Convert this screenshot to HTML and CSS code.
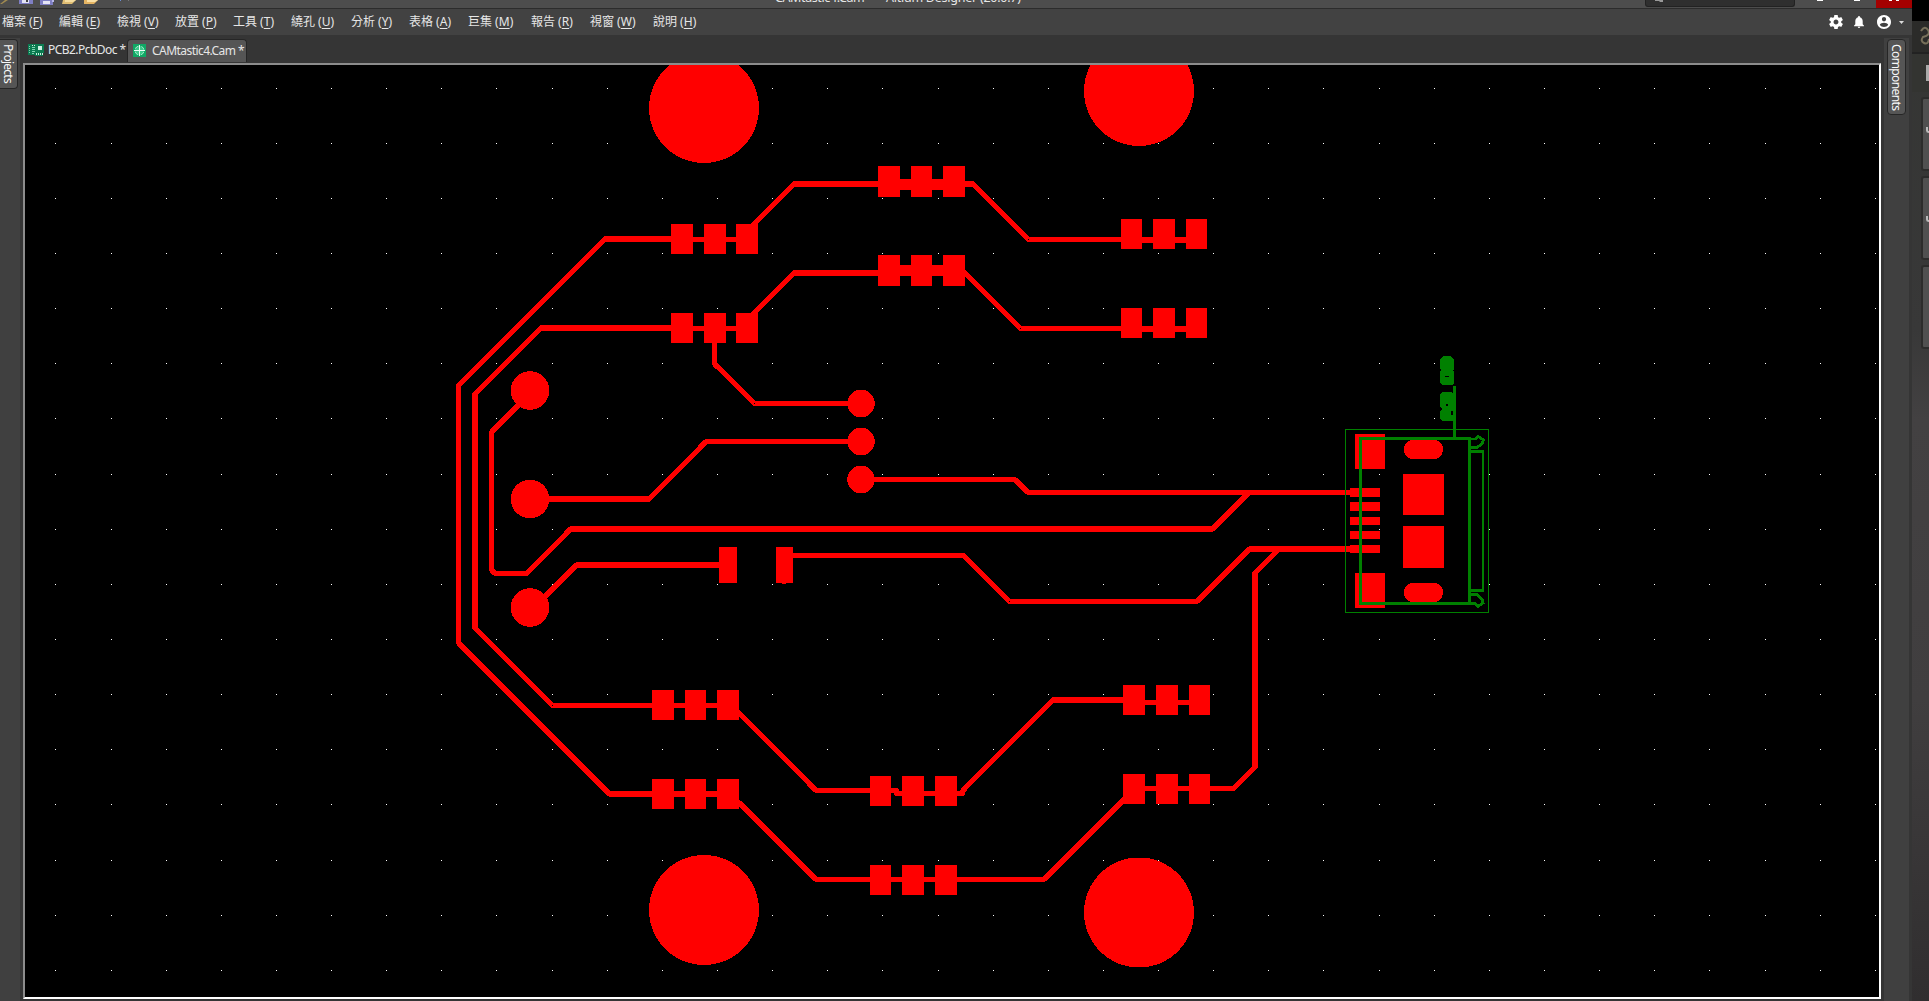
FILE: index.html
```
<!DOCTYPE html>
<html lang="zh-Hant">
<head>
<meta charset="utf-8">
<title>CAMtastic4.Cam - Altium Designer</title>
<link rel="stylesheet" href="styles.css">
</head>
<body>
<div class="desktop">
  <div class="app">
    <header class="titlebar">
      <svg class="quick" width="140" height="8" viewBox="0 0 140 8">
        <path d="M0 4L5 0H8L2 4z" fill="#a08a50"/>
        <path d="M19 0H33V4H19z" fill="#7f7fc4"/><path d="M22 0H29V3H22z" fill="#e4e4f4"/><path d="M26 0h2v2h-2z" fill="#444"/>
        <path d="M40 0H53V5H40z" fill="#7f7fc4"/><path d="M43 1H50V4H43z" fill="#e4e4f4"/><path d="M52 0h2v2h-2z" fill="#b8b8e8"/>
        <path d="M63 0H76L72 4H62z" fill="#e0bd73"/><path d="M65 0H76L73 2H65z" fill="#f5dda0"/>
        <path d="M84 0H98L94 4H84z" fill="#e5b463"/><path d="M87 0H98L95 2H87z" fill="#fae0a6"/>
        <path d="M120 0h1v1h-1z" fill="#6d8fd8"/><path d="M128 0h1v1h-1z" fill="#777"/>
      </svg>
      <div class="caption"><span class="doc">CAMtastic4.Cam</span><span>Altium Designer (20.0.7)</span></div>
      <div class="search"><svg width="10" height="3" viewBox="0 0 10 3"><path d="M0 0h8v2H5L4 1H0z" fill="#999"/></svg></div>
      <div class="winbtn"><i class="dash"></i></div>
      <div class="winbtn"><i class="dash"></i></div>
      <div class="winbtn close"><i class="dot"></i><i class="dot"></i></div>
    </header>

    <nav class="menubar">
      <div class="menus">
        <span>檔案 (<u>F</u>)</span><span>編輯 (<u>E</u>)</span><span>檢視 (<u>V</u>)</span><span>放置 (<u>P</u>)</span><span>工具 (<u>T</u>)</span><span>繞孔 (<u>U</u>)</span><span>分析 (<u>Y</u>)</span><span>表格 (<u>A</u>)</span><span>巨集 (<u>M</u>)</span><span>報告 (<u>R</u>)</span><span>視窗 (<u>W</u>)</span><span>說明 (<u>H</u>)</span>
      </div>
      <div class="tools">
        <svg class="gear" width="14" height="14" viewBox="2 2 20 20"><path fill="#fff" d="M19.43 12.98c.04-.32.07-.64.07-.98s-.03-.66-.07-.98l2.11-1.65c.19-.15.24-.42.12-.64l-2-3.46c-.12-.22-.39-.3-.61-.22l-2.49 1c-.52-.4-1.08-.73-1.69-.98l-.38-2.65C14.46 2.18 14.25 2 14 2h-4c-.25 0-.46.18-.49.42l-.38 2.65c-.61.25-1.17.59-1.69.98l-2.49-1c-.23-.09-.49 0-.61.22l-2 3.46c-.13.22-.07.49.12.64l2.11 1.65c-.04.32-.07.65-.07.98s.03.66.07.98l-2.11 1.65c-.19.15-.24.42-.12.64l2 3.46c.12.22.39.3.61.22l2.49-1c.52.4 1.08.73 1.69.98l.38 2.65c.03.24.24.42.49.42h4c.25 0 .46-.18.49-.42l.38-2.65c.61-.25 1.17-.59 1.69-.98l2.49 1c.23.09.49 0 .61-.22l2-3.46c.12-.22.07-.49-.12-.64l-2.11-1.65zM12 15.5c-1.93 0-3.5-1.57-3.5-3.5s1.57-3.5 3.5-3.5 3.5 1.57 3.5 3.5-1.57 3.5-3.5 3.5z"/></svg>
        <svg class="bell" width="10" height="12" viewBox="4 2.5 16 19.5"><path fill="#fff" d="M12 22c1.1 0 2-.9 2-2h-4c0 1.1.9 2 2 2zm6-6v-5c0-3.07-1.64-5.64-4.5-6.32V4c0-.83-.67-1.5-1.5-1.5s-1.5.67-1.5 1.5v.68C7.63 5.36 6 7.92 6 11v5l-2 2v1h16v-1l-2-2z"/></svg>
        <svg class="user" width="14" height="14" viewBox="2 2 20 20"><path fill="#fff" d="M12 2C6.48 2 2 6.48 2 12s4.48 10 10 10 10-4.48 10-10S17.52 2 12 2zm0 3c1.66 0 3 1.34 3 3s-1.34 3-3 3-3-1.34-3-3 1.34-3 3-3zm0 14.2c-2.5 0-4.71-1.28-6-3.22.03-1.99 4-3.08 6-3.08 1.99 0 5.97 1.09 6 3.08-1.29 1.94-3.5 3.22-6 3.22z"/></svg>
        <svg width="5" height="3" viewBox="0 0 5 3"><path fill="#ddd" d="M0 0H5L2.500 3z"/></svg>
      </div>
    </nav>

    <main class="workspace">
      <aside class="dock left"><div class="docktab">Projects</div></aside>
      <section class="center">
        <div class="tabs">
          <div class="tab pcb">
            <svg width="16" height="12" viewBox="0 0 16 12"><path fill="#0b7a50" d="M0 0h16v9h-1v3H7V11H0z"/><path fill="#c8efe0" d="M10 2h4v4h-4zM8 9h1v2H8zM10 9h1v2h-1zM12 9h1v2h-1zM14 9h1v2h-1zM4 1h1v1H4zM6 1h1v1H6z"/><path fill="#7fd3b0" d="M1 2h1v1H1zM1 4h1v1H1zM1 6h1v1H1zM1 8h1v1H1zM4 3h3v1H4zM4 5h3v1H4zM4 7h3v1H4zM4 9h2v1H4z"/></svg>
            <span>PCB2.PcbDoc *</span>
          </div>
          <div class="tab cam">
            <svg width="13" height="13" viewBox="0 0 13 13"><path fill="#10a865" d="M0 0h13v13H0z"/><circle cx="6.500" cy="6.500" r="4.500" fill="#3cc98a" stroke="#a9ecce" stroke-width="1" stroke-dasharray="4 3.070" stroke-dashoffset="-1.500"/><path fill="#e8fff5" d="M6 1h1v11H6zM1 6h11v1H1z"/></svg>
            <span>CAMtastic4.Cam *</span>
          </div>
        </div>
        <div class="viewport">
<svg class="board" width="1854" height="932" viewBox="25 65 1854 932" shape-rendering="crispEdges">
  <defs>
    <path id="dots" fill="#fff" d="M55 0h1v1h-1zM111 0h1v1h-1zM166 0h1v1h-1zM221 0h1v1h-1zM276 0h1v1h-1zM331 0h1v1h-1zM386 0h1v1h-1zM441 0h1v1h-1zM496 0h1v1h-1zM552 0h1v1h-1zM607 0h1v1h-1zM662 0h1v1h-1zM717 0h1v1h-1zM772 0h1v1h-1zM827 0h1v1h-1zM882 0h1v1h-1zM938 0h1v1h-1zM993 0h1v1h-1zM1048 0h1v1h-1zM1103 0h1v1h-1zM1158 0h1v1h-1zM1213 0h1v1h-1zM1268 0h1v1h-1zM1323 0h1v1h-1zM1379 0h1v1h-1zM1434 0h1v1h-1zM1489 0h1v1h-1zM1544 0h1v1h-1zM1599 0h1v1h-1zM1654 0h1v1h-1zM1709 0h1v1h-1zM1765 0h1v1h-1zM1820 0h1v1h-1zM1875 0h1v1h-1z"/>
  </defs>
  <g>
    <use href="#dots" y="88"/><use href="#dots" y="143"/><use href="#dots" y="198"/><use href="#dots" y="253"/><use href="#dots" y="308"/><use href="#dots" y="363"/><use href="#dots" y="418"/><use href="#dots" y="474"/><use href="#dots" y="529"/><use href="#dots" y="584"/><use href="#dots" y="639"/><use href="#dots" y="694"/><use href="#dots" y="749"/><use href="#dots" y="804"/><use href="#dots" y="860"/><use href="#dots" y="915"/><use href="#dots" y="970"/>
  </g>

  <!-- mounting holes, wire pads -->
  <g class="copper">
    <circle cx="704" cy="108" r="55"/><circle cx="1139" cy="91" r="55"/><circle cx="704" cy="910" r="55"/><circle cx="1139" cy="912.500" r="55"/>
    <circle cx="530" cy="390.500" r="19.300"/><circle cx="530" cy="499" r="19.300"/><circle cx="530" cy="607.500" r="19.300"/>
    <circle cx="861" cy="403.500" r="13.800"/><circle cx="861" cy="441.500" r="13.800"/><circle cx="861" cy="479.500" r="13.800"/>
  </g>

  <!-- traces, 5 units wide -->
  <g class="trace">
    <path d="M605 239L458.500 385.500V643L610 794.500"/>
    <path d="M754 224L794 184M754 313L794 273"/>
    <path d="M973 184L1028.500 239.500H1121M962 270L1020.500 328.500H1121"/>
    <path d="M541 328L475 394M475 628L552.500 705.500H652"/>
    <path d="M714.500 343V364L754.500 403.500H861"/>
    <path d="M649 499L706 441.500H861"/>
    <path d="M530 393.500L491.500 432V570L495 573.500H526.500L570.500 529"/>
    <path d="M861 479.500H1015L1028 492.500H1350M1212.500 529L1249 492.500"/>
    <path d="M532 609.500L576.500 565"/>
    <path d="M793 555.500H963.500L1009.500 601.500H1197L1249.500 549M1279 549L1255 573M1255 767L1233.500 788.500H1210"/>
    <path d="M739 713L816 790.500H896.500V793.500H962.500V791L1053 700"/>
    <path d="M739 802.500L816 879.500H1044L1125 798.500"/>
  </g>

  <!-- traces, 6 units wide -->
  <g class="trace wide">
    <path d="M605 239H671M794 184H973M794 273H878M541 328H671"/>
    <path d="M475 394V628M610 794H652M549 499H649M570.500 529H1212.500M576.500 565H719"/>
    <path d="M1249.500 549H1350M1255 573V767M1053 700H1123"/>
  </g>

  <!-- LED footprints -->
  <g class="copper">
    <path d="M671 224h22v30h-22zM704 224h22v30h-22zM736 224h22v30h-22zM693 237h43v5h-43z"/>
    <path d="M671 313h22v30h-22zM704 313h22v30h-22zM736 313h22v30h-22zM693 326h43v5h-43z"/>
    <path d="M878 166h22v31h-22zM911 166h21v31h-21zM943 166h22v31h-22zM900 179h43v11h-43z"/>
    <path d="M878 255h22v31h-22zM911 255h21v31h-21zM943 255h22v31h-22zM900 265h43v11h-43z"/>
    <path d="M1121 219h21v30h-21zM1153 219h22v30h-22zM1186 219h21v30h-21zM1142 237h44v6h-44z"/>
    <path d="M1121 308h21v30h-21zM1153 308h22v30h-22zM1186 308h21v30h-21zM1142 326h44v6h-44z"/>
    <path d="M652 690h22v30h-22zM685 690h21v30h-21zM717 690h22v30h-22zM674 703h43v5h-43z"/>
    <path d="M652 779h22v30h-22zM685 779h21v30h-21zM717 779h22v30h-22zM674 791h43v6h-43z"/>
    <path d="M870 776h21v30h-21zM902 776h22v30h-22zM935 776h22v30h-22z"/>
    <path d="M870 865h21v30h-21zM902 865h22v30h-22zM935 865h22v30h-22z"/>
    <path d="M1123 685h22v30h-22zM1156 685h22v30h-22zM1189 685h21v30h-21zM1145 700h44v5h-44z"/>
    <path d="M1123 774h22v30h-22zM1156 774h22v30h-22zM1189 774h21v30h-21zM1145 786h44v5h-44z"/>
    <path d="M719 547h18v36h-18zM776 547h17v36h-17zM782 583h4v1h-4z"/>
  </g>

  <!-- USB connector -->
  <g class="copper">
    <path d="M1355 434h30v35h-30zM1355 573h30v35h-30z"/>
    <path d="M1350 488h30v9h-30zM1350 502h30v9h-30zM1350 517h30v8h-30zM1350 531h30v8h-30zM1350 545h30v8h-30z"/>
    <path d="M1403 474h41v41h-41zM1403 526h41v42h-41z"/>
    <rect x="1404" y="440" width="39" height="19" rx="9"/><rect x="1404" y="583" width="39" height="19" rx="9"/>
  </g>
  <g class="silk">
    <path class="hair" d="M1345.500 429.500H1488.500V612.500H1345.500z"/>
    <path d="M1360.500 438.500H1469.500V603.500H1360.500zM1454.500 386V438"/>
    <path d="M1471 451.500H1483M1471 590.500H1483"/><path class="thin" d="M1483 450V592"/>
    <path class="hook" d="M1471 439H1475L1478 436.500L1483.500 440L1482 444L1477 447.500H1471M1471 594.500H1477L1482 599L1483 603L1478 606.500L1475 603.500H1471"/>
    <path class="blob" d="M1443 356h7l4 4v9l-1 1 1 2v11l-2 2h-10l-2-2v-11l1-2-1-1v-9z M1445 376v1h4v-1z"/>
    <path class="blob" d="M1442 392h10l2 3v9l-2 2 2 2v12l-2 1h-10l-2-3v-7l2-2-2-3v-11z M1446 404v2h2v-2z M1451 411v4h2v-4z"/>
  </g>
</svg>
        </div>
      </section>
      <aside class="dock right"><div class="docktab">Components</div></aside>
    </main>
  </div>

  <div class="behind">
    <div class="black"></div>
    <div class="strip"><svg width="10" height="22" viewBox="0 0 10 22"><path fill="none" stroke="#77705a" stroke-width="2" d="M1 7Q5 1 8 6T3 13Q0 17 4 19T9 15"/></svg></div>
    <div class="strip two"><i></i></div>
    <div class="ghost g1"><i></i></div>
    <div class="ghost g2"><i></i></div>
    <div class="ghost g3"></div>
  </div>
</div>
</body>
</html>
```
FILE: styles.css
```
* { box-sizing: border-box; }
body {
  margin: 0;
  background: #353535;
  font: 12px/16px "Noto Sans", "Noto Sans CJK TC", sans-serif;
  color: #e6e6e6;
  overflow: hidden;
}
svg { display: block; flex: none; }
.desktop { display: flex; width: 1929px; height: 1001px; }
.app { width: 1912px; display: flex; flex-direction: column; background: #353535; }

.titlebar {
  height: 9px;
  flex: none;
  display: flex;
  background: #4d4d4d;
  border-bottom: 1px solid #2c2c2c;
  overflow: hidden;
}
.caption {
  display: flex;
  width: 870px;
  margin-left: 635px;
  margin-top: -12px;
  height: 20px;
  line-height: 20px;
  font-size: 12.500px;
  letter-spacing: -0.250px;
  white-space: nowrap;
}
.caption .doc { width: 111px; letter-spacing: -0.400px; }
.search {
  width: 150px;
  height: 7px;
  background: #2f2f2f;
  border: 1px solid #222;
  border-top: 0;
  border-radius: 0 0 3px 3px;
  padding-left: 9px;
}
.winbtn { width: 36px; display: flex; justify-content: center; }
.search + .winbtn { margin-left: 6px; width: 38px; }
.dash { width: 6px; height: 1px; background: #fff; }
.winbtn.close { width: 36px; margin-left: auto; background: #a40000; gap: 4px; }
.dot { width: 3px; height: 1px; background: #fff; }

.menubar {
  height: 26px;
  flex: none;
  display: flex;
  justify-content: space-between;
  align-items: center;
  background: #424242;
}
.menus {
  display: grid;
  grid-template-columns: 57px 58px 58px 58px 58px 60px 58px 59px 63px 59px 63px 60px;
  padding-left: 2px;
  white-space: nowrap;
}
.menus u { text-underline-offset: 2px; }
.tools { display: flex; align-items: center; padding-right: 8px; }
.gear { margin-right: 11px; }
.bell { margin-right: 13px; }
.user { margin-right: 8px; }

.workspace { flex: 1; display: flex; min-height: 0; }
.dock { background: #404040; margin-top: 3px; padding-top: 1px; flex: none; }
.dock.left { width: 20px; }
.dock.right { width: 25px; padding-left: 3px; margin-right: 3px; margin-left: 3px; }
.docktab {
  writing-mode: vertical-rl;
  background: #555;
  border: 1px solid #262626;
  border-radius: 4px;
  line-height: 16px;
  color: #f8f8f8;
}
.left .docktab { width: 18px; height: 50px; padding-top: 4px; padding-right: 1px; border-left: 0; border-radius: 0 4px 4px 0; letter-spacing: -0.750px; }
.right .docktab { width: 19px; height: 76px; padding-top: 4px; padding-right: 1px; letter-spacing: -0.600px; }

.center { width: 1861px; padding-left: 3px; display: flex; flex-direction: column; }
.tabs { display: flex; height: 28px; padding: 4px 0 1px 5px; flex: none; letter-spacing: -0.550px; }
.tab { display: flex; align-items: center; height: 23px; white-space: nowrap; }
.tab.pcb { width: 99px; gap: 4px; padding-bottom: 1px; }
.tab.cam {
  width: 120px;
  padding-left: 5px;
  padding-bottom: 1px;
  gap: 6px;
  background: #555;
  border: 1px solid #262626;
  border-bottom: 0;
  border-radius: 4px 4px 0 0;
}
.viewport {
  width: 1858px;
  height: 936px;
  background: #000;
  border: 2px solid #fff;
  border-top-color: #8c8c8c;
  border-left-color: #8c8c8c;
}

.copper { fill: #f00; }
.trace { fill: none; stroke: #f00; stroke-width: 5; stroke-linejoin: round; stroke-linecap: round; }
.trace.wide { stroke-width: 6; stroke-linecap: butt; }
.silk { fill: none; stroke: #008000; stroke-width: 3; }
.silk .hair { stroke-width: 1; }
.silk .thin { stroke-width: 2; }
.silk .hook { stroke-width: 2.800; }
.silk .blob { fill: #008000; fill-rule: evenodd; stroke: none; }

.behind {
  width: 17px;
  display: flex;
  flex-direction: column;
  align-items: flex-end;
  background: linear-gradient(180deg, #343533 0, #383838 330px, #434142 420px, #403e3f 700px, #302e2f 1001px);
}
.black { width: 17px; height: 21px; background: #000; }
.strip { width: 17px; height: 33px; padding: 3px 0 0 8px; background: #2b2b29; border-bottom: 2px solid #222; overflow: hidden; }
.strip.two { height: 38px; padding: 11px 0 0 14px; background: #333431; border: 0; }
.strip i { display: block; width: 3px; height: 16px; background: #aaa; }
.ghost { width: 8px; padding: 28px 0 0 3px; background: #505050; border: 2px solid #2c2c2b; border-right: 0; border-radius: 3px 0 0 3px; }
.ghost i { display: block; height: 6px; border-left: 2px solid #bbb; border-bottom: 2px solid #bbb; border-radius: 0 0 0 3px; }
.g1 { height: 74px; margin-top: 5px; }
.g2 { height: 84px; margin-top: 5px; padding-top: 38px; }
.g3 { height: 84px; margin-top: 5px; }
```
